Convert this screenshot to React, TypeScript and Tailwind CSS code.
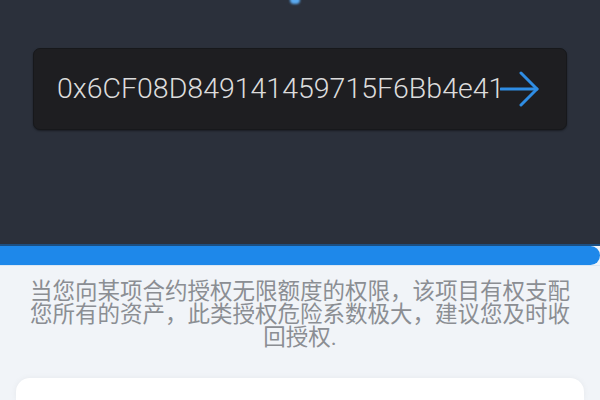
import React from "react";

const address = "0x6CF08D849141459715F6Bb4e41";

const ArrowRight = () => (
  <svg
    width="40"
    height="36"
    viewBox="0 0 40 36"
    fill="none"
    stroke="#2f8de4"
    strokeWidth="3"
    strokeLinecap="round"
    strokeLinejoin="round"
    className="shrink-0 -ml-[4px]"
  >
    <path d="M1 18 H37" />
    <path d="M21 2 L37 18 L21 34" />
  </svg>
);

export default function App() {
  return (
    <div
      className="w-[600px] h-[400px] overflow-hidden bg-[#f1f4f8] flex flex-col"
      style={{ fontFamily: "Roboto, 'Noto Sans CJK SC', sans-serif" }}
    >
      {/* dark header */}
      <div className="relative h-[244px] shrink-0 bg-[#2b303b] px-[33px] pt-[48px]">
        <div className="absolute left-[290px] -top-[4px] w-[10px] h-[8px] rounded-full bg-[#5aa9f0] blur-[1px]" />
        <div className="h-[82px] rounded-[7px] bg-[#1e1e21] border border-[#17181b] shadow-[0_1px_2px_rgba(0,0,0,0.4)] flex items-center pl-[23px]">
          <span className="text-[28.5px] leading-none font-light text-[#dcdcdc]">
            {address}
          </span>
          <ArrowRight />
        </div>
      </div>
      <div className="h-[2px] shrink-0 bg-[#1c4f82]" />
      {/* blue bar */}
      <div className="h-[19px] shrink-0 bg-[#1e88ea] rounded-r-full" />
      <div className="h-px shrink-0 bg-[#dbe7f3]" />
      {/* notice */}
      <p className="px-[20px] pt-[14px] text-center text-[22.5px] leading-[23px] text-[#8b8e93]">
        当您向某项合约授权无限额度的权限，该项目有权支配您所有的资产，此类授权危险系数极大，建议您及时收回授权.
      </p>
      <div className="mx-[16px] mt-[29px] flex-1 rounded-t-[14px] bg-white shadow-[0_0_6px_rgba(0,0,0,0.05)]" />
    </div>
  );
}
